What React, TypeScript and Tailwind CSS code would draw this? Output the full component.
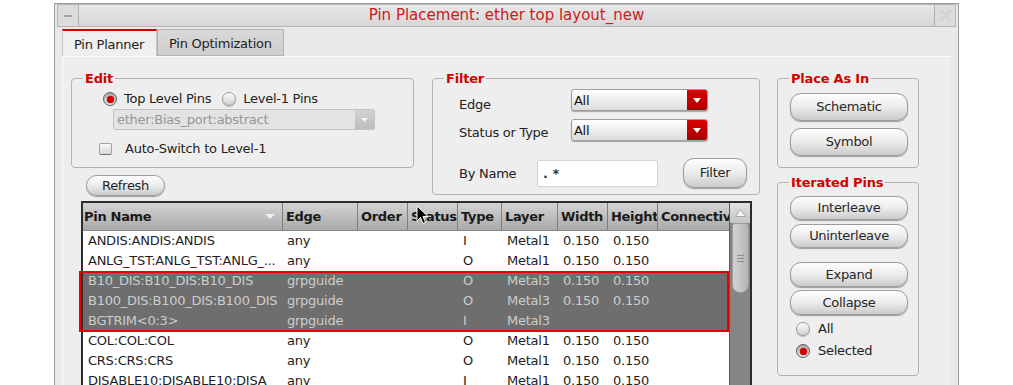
import React from "react";

const W = ["w-[199px]", "w-[75px]", "w-[50px]", "w-[50px]", "w-[44px]", "w-[56px]", "w-[50px]", "w-[50px]", "w-[72px]"];

function Btn({ children, className = "" }: { children: React.ReactNode; className?: string }) {
  return (
    <div
      className={`flex shrink-0 items-center justify-center rounded-[11px] border border-[#9c9c9c] bg-linear-to-b from-[#fdfdfd] via-[#ececec] to-[#cbcbcb] text-[13px] tracking-[-0.3px] text-[#262626] shadow-[0_1px_1px_rgba(0,0,0,0.35)] ${className}`}
    >
      {children}
    </div>
  );
}

function Radio({ on }: { on?: boolean }) {
  return on ? (
    <span className="flex h-[14px] w-[14px] items-center justify-center rounded-full border border-[#5e5e5e] bg-linear-to-b from-[#a9a9a9] to-[#e8e8e8]">
      <span className="h-[7px] w-[7px] rounded-full bg-[#d60000] shadow-[0_0_1px_rgba(120,0,0,0.8)]" />
    </span>
  ) : (
    <span className="flex h-[14px] w-[14px] items-center justify-center rounded-full border border-[#9a9a9a] bg-linear-to-b from-[#ffffff] to-[#cfcfcf] shadow-[0_1px_1px_rgba(0,0,0,0.2)]" />
  );
}

function Legend({ children }: { children: React.ReactNode }) {
  return (
    <legend className="ml-[11px] px-[2px] text-[13px] font-bold leading-[15px] tracking-[-0.2px] text-[#d40000]">
      {children}
    </legend>
  );
}

function Select() {
  return (
    <div className="flex h-[22px] w-[137px] overflow-hidden rounded-[3px] border border-[#9e9e9e] bg-linear-to-b from-[#ffffff] to-[#dcdcdc] shadow-[0_1px_1px_rgba(0,0,0,0.3)]">
      <div className="flex flex-1 items-center pl-[2px] text-[13px] leading-none tracking-[-0.3px] text-[#111]">All</div>
      <div className="flex w-[20px] items-center justify-center bg-linear-to-b from-[#dc0000] to-[#a80000]">
        <svg width="8" height="5" viewBox="0 0 8 5">
          <path d="M0 0 L8 0 L4 5 Z" fill="#fff" />
        </svg>
      </div>
    </div>
  );
}

type RowData = string[];

const rows: { d: RowData; hl?: boolean }[] = [
  { d: ["ANDIS:ANDIS:ANDIS", "any", "", "", "I", "Metal1", "0.150", "0.150", ""] },
  { d: ["ANLG_TST:ANLG_TST:ANLG_...", "any", "", "", "O", "Metal1", "0.150", "0.150", ""] },
  { d: ["B10_DIS:B10_DIS:B10_DIS", "grpguide", "", "", "O", "Metal3", "0.150", "0.150", ""], hl: true },
  { d: ["B100_DIS:B100_DIS:B100_DIS", "grpguide", "", "", "O", "Metal3", "0.150", "0.150", ""], hl: true },
  { d: ["BGTRIM<0:3>", "grpguide", "", "", "I", "Metal3", "", "", ""], hl: true },
  { d: ["COL:COL:COL", "any", "", "", "O", "Metal1", "0.150", "0.150", ""] },
  { d: ["CRS:CRS:CRS", "any", "", "", "O", "Metal1", "0.150", "0.150", ""] },
  { d: ["DISABLE10:DISABLE10:DISA", "any", "", "", "I", "Metal1", "0.150", "0.150", ""] },
  { d: ["DOUT:DOUT:DOUT", "any", "", "", "O", "Metal1", "0.150", "0.150", ""] },
];

function Row({ d, hl }: { d: RowData; hl?: boolean }) {
  return (
    <div
      className={`flex h-[20px] shrink-0 items-center text-[13px] leading-[20px] tracking-[-0.25px] ${
        hl ? "bg-[#6e6e6e] text-[#cdcdcd]" : "bg-white text-[#1e1e1e]"
      }`}
    >
      {d.map((t, i) => (
        <div key={i} className={`${W[i]} h-[20px] overflow-hidden whitespace-nowrap ${i < 2 ? "pl-[5px]" : "pl-[6px]"}`}>
          {t}
        </div>
      ))}
    </div>
  );
}

const headers = ["Pin Name", "Edge", "Order", "Status", "Type", "Layer", "Width", "Height", "Connectiv"];

export default function App() {
  return (
    <div className="relative h-[385px] w-[1013px] overflow-hidden bg-white font-['DejaVu_Sans','Liberation_Sans',sans-serif] text-[#222]">
      <div className="ml-[54px] mt-[3px] h-[420px] w-[905px] border border-[#9c9c9c] bg-[#e9e9e9]">
        {/* title bar */}
        <div className="mx-[2px] flex h-[23px] border border-[#b5b5b5] bg-linear-to-b from-[#e8e8e8] to-[#d7d7d7]">
          <div className="flex w-[21px] items-center justify-center border-r border-[#b0b0b0] bg-[#dcdcdc]">
            <span className="h-[2px] w-[8px] rounded-[1px] bg-[#a0a0a0]" />
          </div>
          <div className="flex flex-1 items-center justify-center text-[15px] leading-none text-[#cc1a1a]">
            Pin Placement: ether top layout_new
          </div>
          <div className="flex w-[21px] items-center justify-center border-l border-[#b0b0b0] bg-[#dcdcdc]">
            <svg width="11" height="11" viewBox="0 0 11 11">
              <path d="M1 1 L10 10 M10 1 L1 10" stroke="#c4c4c4" strokeWidth="2.2" strokeLinecap="round" />
              <path d="M1 1 L10 10 M10 1 L1 10" stroke="#f4f4f4" strokeWidth="0.8" strokeLinecap="round" />
            </svg>
          </div>
        </div>

        {/* tabs */}
        <div className="mt-[2px] flex h-[27px] pl-[7px]">
          <div className="flex w-[95px] items-center border-x border-t-2 border-x-[#c4c4c4] border-t-[#d40000] bg-[#efefef] pl-[11px] pt-[3px] text-[13px] tracking-[-0.25px] text-[#1e1e1e]">
            Pin Planner
          </div>
          <div className="flex w-[127px] items-center border border-[#b3b3b3] bg-linear-to-b from-[#d9d9d9] to-[#cdcdcd] pl-[11px] pt-[3px] text-[13px] tracking-[-0.25px] text-[#1e1e1e]">
            Pin Optimization
          </div>
        </div>

        {/* pane */}
        <div className="mx-[7px] h-[360px] border-l border-t border-[#fbfbfb] bg-[#eeeeee]">
          <div className="flex pl-[8px] pt-[14px]">
            {/* left column */}
            <div className="flex w-[689px] flex-col">
              <div className="flex">
                <div className="flex w-[343px] flex-col">
                  <fieldset className="h-[97px] w-[343px] rounded-[4px] border border-[#b3b3b3]">
                    <Legend>Edit</Legend>
                    <div className="ml-[31px] mt-[5px] flex h-[16px] items-center text-[13px] tracking-[-0.25px]">
                      <Radio on />
                      <span className="ml-[7px]">Top Level Pins</span>
                      <span className="ml-[11px]">
                        <Radio />
                      </span>
                      <span className="ml-[7px]">Level-1 Pins</span>
                    </div>
                    <div className="ml-[41px] mt-[2px] flex h-[21px] w-[262px] overflow-hidden rounded-[2px] border border-[#c3c3c3] bg-[#e3e3e3]">
                      <div className="flex flex-1 items-center pl-[3px] text-[13px] leading-[19px] tracking-[-0.25px] text-[#979797]">
                        ether:Bias_port:abstract
                      </div>
                      <div className="flex w-[19px] items-center justify-center bg-linear-to-b from-[#d2d2d2] to-[#bdbdbd]">
                        <svg width="7" height="4" viewBox="0 0 7 4">
                          <path d="M0 0 L7 0 L3.5 4 Z" fill="#f5f5f5" />
                        </svg>
                      </div>
                    </div>
                    <div className="ml-[27px] mt-[11px] flex h-[16px] items-center text-[13px] tracking-[-0.25px]">
                      <span className="h-[12px] w-[13px] rounded-[2px] border border-[#a2a2a2] border-b-[#6f6f6f] bg-linear-to-b from-[#fafafa] to-[#d6d6d6]" />
                      <span className="ml-[13px]">Auto-Switch to Level-1</span>
                    </div>
                  </fieldset>
                  <Btn className="ml-[15px] mt-[7px] h-[21px] w-[79px]">Refresh</Btn>
                </div>

                <fieldset className="ml-[18px] h-[124px] w-[328px] rounded-[4px] border border-[#b3b3b3]">
                  <Legend>Filter</Legend>
                  <div className="ml-[26px] mt-[3px] flex items-start">
                    <span className="mt-[8px] w-[112px] text-[13px] leading-[16px] tracking-[-0.25px]">Edge</span>
                    <Select />
                  </div>
                  <div className="ml-[26px] mt-[6px] flex items-start">
                    <span className="mt-[6px] w-[112px] text-[13px] leading-[16px] tracking-[-0.25px]">Status or Type</span>
                    <Select />
                  </div>
                  <div className="ml-[26px] mt-[17px] flex items-start">
                    <span className="mt-[8px] w-[78px] text-[13px] leading-[16px] tracking-[-0.25px]">By Name</span>
                    <div className="mt-[2px] flex h-[27px] w-[121px] items-center rounded-[2px] border border-[#d2d2d2] bg-white pl-[5px] text-[13px] font-bold text-[#333]">
                      .&nbsp;*
                    </div>
                    <Btn className="ml-[25px] h-[30px] w-[64px]">Filter</Btn>
                  </div>
                </fieldset>
              </div>

              {/* table */}
              <div className="ml-[10px] mt-[5px] flex h-[240px] w-[671px] shrink-0 border-2 border-[#2c2c2c] bg-white">
                <div className="flex w-[646px] flex-col">
                  <div className="flex h-[28px] shrink-0 border-b border-[#8a8a8a] bg-linear-to-b from-[#d4d4d4] to-[#a9a9a9]">
                    {headers.map((h, i) => (
                      <div
                        key={h}
                        className={`${W[i]} flex items-center overflow-hidden whitespace-nowrap text-[13px] font-bold leading-[16px] tracking-[-0.3px] text-[#1a1a1a] ${
                          i === 0 ? "justify-between pl-[1px] pr-[7px]" : "border-l border-[#7e7e7e] pl-[3px]"
                        }`}
                      >
                        {h}
                        {i === 0 && (
                          <svg width="10" height="5" viewBox="0 0 10 5">
                            <path d="M0 0 L10 0 L5 5 Z" fill="#efefef" />
                          </svg>
                        )}
                      </div>
                    ))}
                  </div>
                  <Row d={rows[0].d} />
                  <Row d={rows[1].d} />
                  <div className="relative shrink-0">
                    <Row d={rows[2].d} hl />
                    <Row d={rows[3].d} hl />
                    <Row d={rows[4].d} hl />
                    <div className="pointer-events-none absolute -bottom-[1px] -left-[4px] right-0 top-0 border-2 border-[#e60000]" />
                  </div>
                  <Row d={rows[5].d} />
                  <Row d={rows[6].d} />
                  <Row d={rows[7].d} />
                  <Row d={rows[8].d} />
                </div>
                {/* scrollbar */}
                <div className="flex w-[21px] flex-col border-l border-[#5a5a5a] bg-[#858585]">
                  <div className="flex h-[20px] shrink-0 items-center justify-center bg-linear-to-b from-[#e2e2e2] to-[#c4c4c4]">
                    <svg width="11" height="8" viewBox="0 0 11 8">
                      <path d="M5.5 0.5 L10.5 7.5 L0.5 7.5 Z" fill="#f7f7f7" stroke="#9a9a9a" strokeWidth="0.8" />
                    </svg>
                  </div>
                  <div className="ml-[2px] flex h-[70px] w-[17px] shrink-0 flex-col items-center justify-center gap-[2px] rounded-b-[8px] rounded-t-[3px] border border-[#9c9c9c] bg-linear-to-r from-[#d0d0d0] via-[#c6c6c6] to-[#b3b3b3]">
                    <span className="h-px w-[7px] bg-[#8c8c8c]" />
                    <span className="h-px w-[7px] bg-[#8c8c8c]" />
                    <span className="h-px w-[7px] bg-[#8c8c8c]" />
                  </div>
                </div>
              </div>
            </div>

            {/* right column */}
            <div className="ml-[17px] flex w-[142px] flex-col">
              <fieldset className="h-[97px] rounded-[4px] border border-[#b3b3b3]">
                <Legend>Place As In</Legend>
                <Btn className="ml-[12px] mt-[7px] h-[28px] w-[118px]">Schematic</Btn>
                <Btn className="ml-[12px] mt-[7px] h-[28px] w-[118px]">Symbol</Btn>
              </fieldset>
              <fieldset className="mt-[7px] h-[201px] rounded-[4px] border border-[#b3b3b3]">
                <Legend>Iterated Pins</Legend>
                <Btn className="ml-[12px] mt-[6px] h-[24px] w-[118px]">Interleave</Btn>
                <Btn className="ml-[12px] mt-[4px] h-[24px] w-[118px]">Uninterleave</Btn>
                <Btn className="ml-[12px] mt-[14px] h-[25px] w-[118px]">Expand</Btn>
                <Btn className="ml-[12px] mt-[3px] h-[25px] w-[118px]">Collapse</Btn>
                <div className="ml-[18px] mt-[6px] flex h-[16px] items-center text-[13px] tracking-[-0.25px]">
                  <Radio />
                  <span className="ml-[8px]">All</span>
                </div>
                <div className="ml-[18px] mt-[6px] flex h-[16px] items-center text-[13px] tracking-[-0.25px]">
                  <Radio on />
                  <span className="ml-[8px]">Selected</span>
                </div>
              </fieldset>
            </div>
          </div>
        </div>
      </div>

      {/* mouse cursor */}
      <svg className="pointer-events-none absolute left-[416px] top-[205px]" width="13" height="20" viewBox="0 0 13 20">
        <path d="M1 1 L1 16 L4.5 12.5 L7 18.5 L9.5 17.5 L7 11.5 L12 11.5 Z" fill="#000" stroke="#fff" strokeWidth="1" strokeLinejoin="round" />
      </svg>
    </div>
  );
}
